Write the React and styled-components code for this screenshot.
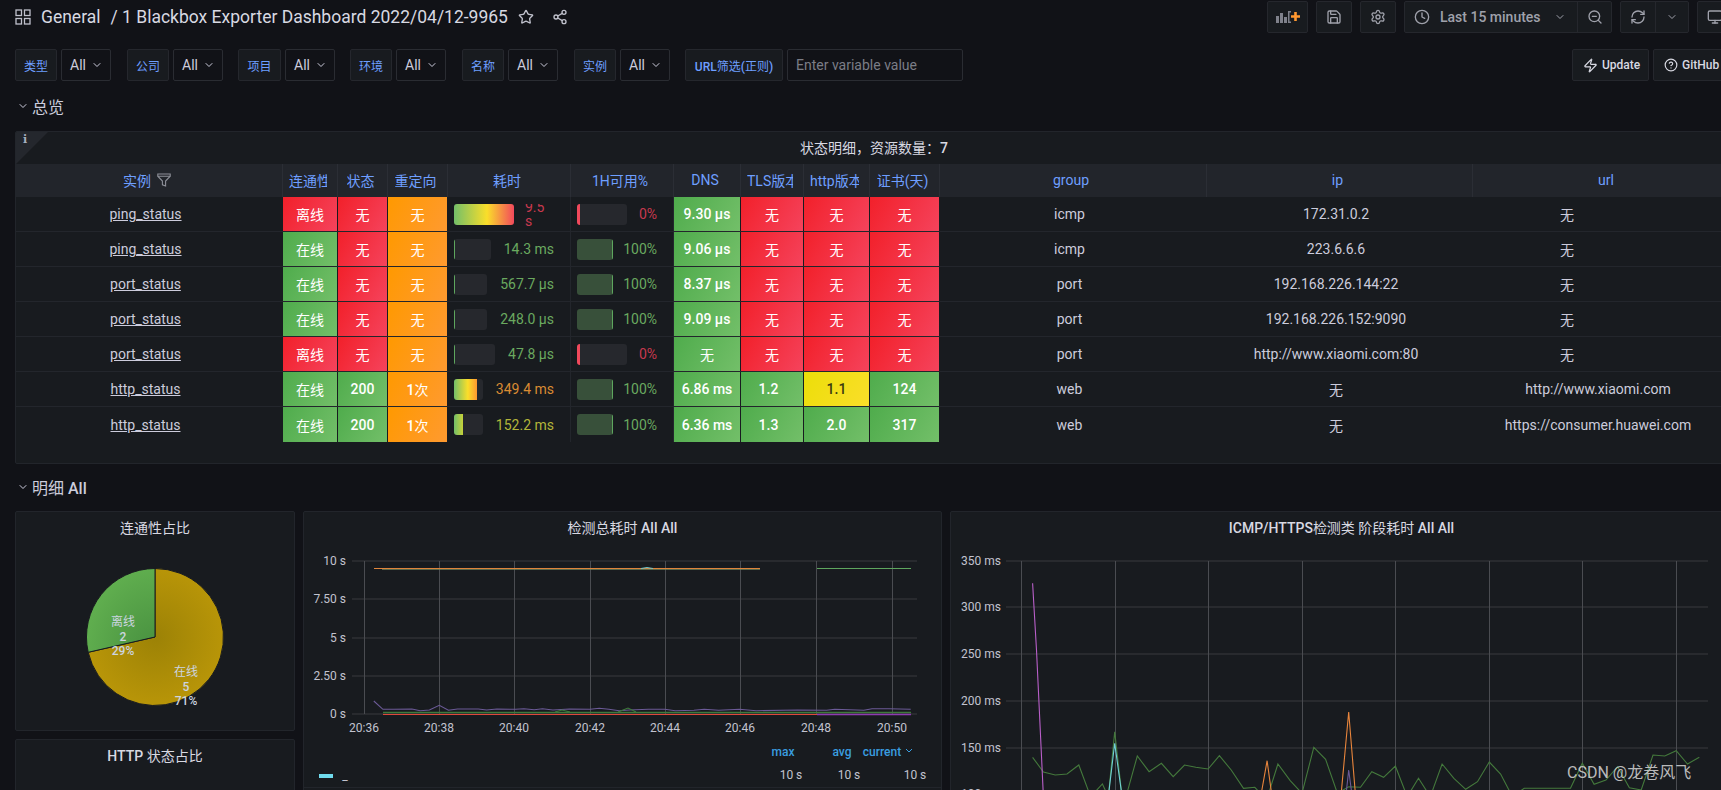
import React from "react";
import styled, { createGlobalStyle } from "styled-components";
import { ChevronDown, Star, Share2, Save, Settings, Clock, ZoomOut, RefreshCw, Monitor, Zap, CircleHelp } from "lucide-react";

const GlobalStyle = createGlobalStyle`
  html, body {
    margin: 0;
    height: 100%;
    background: #111217;
    overflow: hidden;
  }
  body {
    font-family: Roboto, "Noto Sans CJK SC", sans-serif;
    font-size: 14px;
    color: #ccccdc;
  }
`;

const Page = styled.div`
  width: 1721px;
  height: 790px;
  overflow: hidden;
  padding: 1px 0 0 15px;
  box-sizing: border-box;
`;

const TopBar = styled.div`
  display: flex;
  align-items: center;
  height: 32px;
  width: 1718px;
`;

const Title = styled.div`
  display: flex;
  align-items: center;
  font-size: 17.5px;
  color: #d8d9e2;
  white-space: nowrap;
`;

const TitleText = styled.span`
  margin-left: ${(p) => p.$ml}px;
`;

const TitleIcon = styled.span`
  display: flex;
  margin-left: ${(p) => p.$ml}px;
  color: #c0c1cc;
`;

const Tools = styled.div`
  display: flex;
  gap: 8px;
  margin-left: auto;
  flex-shrink: 0;
`;

const ToolButton = styled.div`
  display: flex;
  align-items: center;
  justify-content: center;
  flex-shrink: 0;
  height: 32px;
  box-sizing: border-box;
  width: ${(p) => p.$w}px;
  background: #181b1f;
  border: 1px solid #25272d;
  border-radius: 2px;
  color: #9fa1ab;
`;

const ToolGroup = styled.div`
  display: flex;
  flex-shrink: 0;
  height: 32px;
  box-sizing: border-box;
  background: #181b1f;
  border: 1px solid #25272d;
  border-radius: 2px;
  color: #9fa1ab;
`;

const ToolPart = styled.div`
  display: flex;
  align-items: center;
  justify-content: center;
  box-sizing: border-box;
  width: ${(p) => p.$w}px;
  font-weight: 500;
  border-left: ${(p) => (p.$split ? "1px solid #25272d" : "none")};
`;

const TimePart = styled(ToolPart)`
  justify-content: flex-start;
  gap: 10px;
  padding-left: 9px;
`;

const TimeCaret = styled(ChevronDown)`
  margin-left: 3px;
`;

const VarRow = styled.div`
  display: flex;
  align-items: center;
  height: 32px;
  margin-top: 16px;
  width: 1740px;
`;

const VarLabel = styled.div`
  display: flex;
  align-items: center;
  justify-content: center;
  height: 32px;
  box-sizing: border-box;
  width: ${(p) => p.$w}px;
  background: #181b1f;
  border: 1px solid #25272d;
  border-radius: 2px;
  color: #6e9fff;
  font-size: 12px;
  font-weight: 500;
  margin-left: ${(p) => p.$ml}px;
  white-space: nowrap;
`;

const VarSelect = styled.div`
  display: flex;
  align-items: center;
  justify-content: center;
  gap: 5px;
  height: 32px;
  box-sizing: border-box;
  width: 50px;
  margin-left: 4px;
  padding-left: 1px;
  background: #111217;
  border: 1px solid #2a2c32;
  border-radius: 2px;
  color: #ccccdc;
`;

const VarInput = styled.div`
  display: flex;
  align-items: center;
  height: 32px;
  box-sizing: border-box;
  width: 176px;
  margin-left: 4px;
  padding-left: 8px;
  background: #111217;
  border: 1px solid #2a2c32;
  border-radius: 2px;
  color: #7b7d86;
`;

const LinkButton = styled.div`
  display: flex;
  align-items: center;
  gap: 4px;
  height: 32px;
  box-sizing: border-box;
  padding-left: 10px;
  width: ${(p) => p.$w}px;
  background: #181b1f;
  border: 1px solid #25272d;
  border-radius: 2px;
  font-size: 12px;
  font-weight: 500;
  color: #d8d9e2;
  margin-left: ${(p) => p.$ml}px;
`;

const Section = styled.div`
  display: flex;
  align-items: center;
  gap: 3px;
  margin-top: ${(p) => p.$mt}px;
  height: 22px;
  padding-left: 2px;
  font-size: 16px;
  font-weight: 500;
  color: #ccccdc;
`;

const Panel = styled.div`
  background: #181b1f;
  border: 1px solid #22252b;
  border-radius: 2px;
  box-sizing: border-box;
  position: relative;
  overflow: hidden;
`;

const TablePanel = styled(Panel)`
  width: 1718px;
  height: 333px;
  margin-top: 14px;
`;

const Corner = styled.div`
  position: absolute;
  left: 0;
  top: 0;
  width: 0;
  height: 0;
  border-style: solid;
  border-width: 32px 32px 0 0;
  border-color: #24272d transparent transparent transparent;
`;

const CornerMark = styled.span`
  position: absolute;
  left: 7px;
  top: 1px;
  color: #a8b0c0;
  font-family: "DejaVu Serif", serif;
  font-size: 11px;
  font-weight: 700;
`;

const PanelTitle = styled.div`
  display: flex;
  align-items: center;
  justify-content: center;
  height: 32px;
  box-sizing: border-box;
  padding-bottom: 2px;
  font-weight: 500;
  color: #d8d9e2;
  white-space: nowrap;
`;

const Han = styled.span`
  font-weight: 400;
`;

const Row = styled.div`
  display: grid;
  grid-template-columns: 267px 55px 50px 60px 123px 103px 67px 63px 66px 70px 267px 266px 271px;
  height: ${(p) => (p.$head ? 33 : 35)}px;
  box-sizing: border-box;
  background: ${(p) => (p.$head ? "#22252b" : "transparent")};
  border-bottom: ${(p) => (p.$last || p.$head ? "none" : "1px solid #23262c")};
`;

const HeadCell = styled.div`
  display: flex;
  align-items: center;
  justify-content: center;
  gap: 6px;
  padding: 0 10px 2px 6px;
  overflow: hidden;
  white-space: nowrap;
  color: #6e9fff;
  border-right: 1px solid #2b2e35;
  svg { color: #8e9099; flex-shrink: 0; }
`;

const HeadLabel = styled.span`
  overflow: hidden;
  flex-shrink: 1;
`;

const tones = {
  red: "linear-gradient(120deg, #f2202a, #f5435c)",
  green: "linear-gradient(120deg, #4fac4c, #73bf69)",
  orange: "linear-gradient(120deg, #ff9900, #ff9a30)",
  yellow: "linear-gradient(120deg, #ecde09, #fade2a)",
};

const ToneCell = styled.div`
  display: flex;
  align-items: center;
  justify-content: center;
  padding-right: ${(p) => p.$pr || 0}px;
  margin-right: 1px;
  background: ${(p) => tones[p.$tone]};
  color: ${(p) => (p.$tone === "yellow" ? "#3a3a10" : "#fff")};
  font-weight: 500;
`;

const TextCell = styled.div`
  display: flex;
  align-items: center;
  justify-content: center;
  padding-right: ${(p) => (p.$pr === undefined ? 8 : p.$pr)}px;
  color: #ccccdc;
`;

const LinkText = styled.span`
  text-decoration: underline;
`;

const GaugeCell = styled.div`
  display: flex;
  align-items: center;
  justify-content: space-between;
  padding: 0 16px 0 6px;
  border-right: 1px solid #23262c;
`;

const GaugeBar = styled.div`
  display: flex;
  height: 21px;
  border-radius: 3px;
  overflow: hidden;
  background: #26282d;
  width: ${(p) => p.$w}px;
  flex-shrink: 0;
`;

const GaugeFill = styled.div`
  height: 100%;
  box-sizing: border-box;
`;

const GaugeValue = styled.div`
  color: ${(p) => p.$color};
  white-space: nowrap;
`;

// the value that no longer fits beside its bar wraps and gets cut at the top
const WrappedValue = styled.div`
  display: flex;
  align-items: flex-end;
  width: 29px;
  height: 24px;
  margin-top: 3px;
  line-height: 14px;
  overflow: hidden;
  color: ${(p) => p.$color};
`;

const Lower = styled.div`
  display: grid;
  grid-template-columns: 280px 639px 783px;
  column-gap: 8px;
  margin-top: 13px;
  width: 1718px;
`;

const SideColumn = styled.div`
  display: flex;
  flex-direction: column;
  gap: 8px;
`;

const PiePanel = styled(Panel)`
  height: 220px;
`;

const HttpPanel = styled(Panel)`
  height: 100px;
`;

const GraphPanel = styled(Panel)`
  height: 290px;
`;

const Chart = styled.svg`
  display: block;
`;

const ChartText = styled.text`
  fill: ${(p) => p.$fill || "#c2c3cf"};
  font-family: Roboto, "Noto Sans CJK SC", sans-serif;
  font-size: 12px;
  font-weight: ${(p) => p.$weight || 400};
  text-anchor: ${(p) => p.$anchor || "end"};
`;

const Watermark = styled.div`
  position: absolute;
  left: 1567px;
  top: 759px;
  color: #d6d6d6;
  font-size: 16px;
  white-space: nowrap;
  opacity: 0.85;
`;

// CJK in the reference never gets a heavier weight, only the latin around it does
const mixed = (text) => (
  <span>
    {text.split(/([\u4e00-\u9fff\uff0c\uff1a]+)/).map((part, i) =>
      i % 2 ? <Han key={i}>{part}</Han> : part
    )}
  </span>
);

const variables = [
  { label: "类型", ml: 0, w: 42 },
  { label: "公司", ml: 16, w: 42 },
  { label: "项目", ml: 15, w: 43 },
  { label: "环境", ml: 15, w: 42 },
  { label: "名称", ml: 16, w: 42 },
  { label: "实例", ml: 16, w: 42 },
];

const heads = ["连通性", "状态", "重定向", "耗时", "1H可用%", "DNS", "TLS版本", "http版本", "证书(天)", "group", "ip", "url"];

const GREEN_V = "#6aa95f";
const RED_V = "#c8394e";

const rows = [
  {
    name: "ping_status", conn: ["离线", "red"], state: ["无", "red"], redirect: "无",
    ms: { w: 60, fill: 60, grad: "linear-gradient(90deg, #73bf69, #fade2a 55%, #f2495c)", text: "9.5 s", color: RED_V, wrap: true },
    up: 0, upText: "0%", dns: ["9.30 μs", "green"], tls: ["无", "red"], http: ["无", "red"], cert: ["无", "red"],
    group: "icmp", ip: "172.31.0.2", url: "无",
  },
  {
    name: "ping_status", conn: ["在线", "green"], state: ["无", "red"], redirect: "无",
    ms: { w: 37, text: "14.3 ms", color: GREEN_V },
    up: 1, upText: "100%", dns: ["9.06 μs", "green"], tls: ["无", "red"], http: ["无", "red"], cert: ["无", "red"],
    group: "icmp", ip: "223.6.6.6", url: "无",
  },
  {
    name: "port_status", conn: ["在线", "green"], state: ["无", "red"], redirect: "无",
    ms: { w: 33, text: "567.7 μs", color: GREEN_V },
    up: 1, upText: "100%", dns: ["8.37 μs", "green"], tls: ["无", "red"], http: ["无", "red"], cert: ["无", "red"],
    group: "port", ip: "192.168.226.144:22", url: "无",
  },
  {
    name: "port_status", conn: ["在线", "green"], state: ["无", "red"], redirect: "无",
    ms: { w: 33, text: "248.0 μs", color: GREEN_V },
    up: 1, upText: "100%", dns: ["9.09 μs", "green"], tls: ["无", "red"], http: ["无", "red"], cert: ["无", "red"],
    group: "port", ip: "192.168.226.152:9090", url: "无",
  },
  {
    name: "port_status", conn: ["离线", "red"], state: ["无", "red"], redirect: "无",
    ms: { w: 41, text: "47.8 μs", color: GREEN_V },
    up: 0, upText: "0%", dns: ["无", "green"], tls: ["无", "red"], http: ["无", "red"], cert: ["无", "red"],
    group: "port", ip: "http://www.xiaomi.com:80", url: "无",
  },
  {
    name: "http_status", conn: ["在线", "green"], state: ["200", "green"], redirect: "1次",
    ms: { w: 29, fill: 23, grad: "linear-gradient(90deg, #73bf69, #fade2a 60%, #ff9830)", text: "349.4 ms", color: "#d98b33" },
    up: 1, upText: "100%", dns: ["6.86 ms", "green"], tls: ["1.2", "green"], http: ["1.1", "yellow"], cert: ["124", "green"],
    group: "web", ip: "无", url: "http://www.xiaomi.com",
  },
  {
    name: "http_status", conn: ["在线", "green"], state: ["200", "green"], redirect: "1次",
    ms: { w: 29, fill: 9, grad: "linear-gradient(90deg, #73bf69, #c6d23a)", text: "152.2 ms", color: "#b3b53a" },
    up: 1, upText: "100%", dns: ["6.36 ms", "green"], tls: ["1.3", "green"], http: ["2.0", "green"], cert: ["317", "green"],
    group: "web", ip: "无", url: "https://consumer.huawei.com",
  },
];

const durationTimes = [
  ["20:36", 364], ["20:38", 439], ["20:40", 514], ["20:42", 590],
  ["20:44", 665], ["20:46", 740], ["20:48", 816], ["20:50", 892],
];
const durationTicks = [["10 s", 561], ["7.50 s", 599], ["5 s", 638], ["2.50 s", 676], ["0 s", 714]];

// series were read off zoomed crops of the reference, so they are in crop units
const fromCrop = (pts, left, scale) =>
  pts.map(([x, y]) => `${(left + x / scale).toFixed(1)},${(510 + y / 3).toFixed(1)}`).join(" ");
const durationLine = (pts) => fromCrop(pts, 300, 2.412);
const phaseLine = (pts) => fromCrop(pts, 950, 2.034);

const purpleLow = [[178,573],[200,598],[225,598],[270,597],[290,602],[312,600],[336,586],[358,601],[380,597],[430,597],[450,600],[475,597],[520,598],[540,596],[565,599],[585,596],[610,600],[650,597],[700,598],[722,595],[745,598],[770,602],[795,600],[840,598],[880,598],[905,602],[950,601],[975,598],[1010,601],[1060,598],[1100,602],[1200,600],[1270,601],[1290,598],[1360,601],[1380,596],[1420,596],[1473,598]];
const phaseGreen = [[168,742],[190,786],[214,795],[238,792],[262,765],[286,860],[310,822],[322,860],[335,665],[350,860],[358,860],[381,738],[405,785],[430,760],[454,800],[477,765],[500,772],[525,777],[548,737],[572,780],[597,835],[620,832],[644,870],[667,762],[692,812],[716,850],[740,712],[764,748],[788,850],[811,830],[835,832],[858,785],[882,802],[906,768],[930,860],[953,805],[977,860],[1001,762],[1025,805],[1049,838],[1073,815],[1097,756],[1120,792],[1144,860],[1168,835],[1192,835],[1216,835],[1240,835],[1262,835],[1286,760],[1310,823],[1334,810],[1358,770],[1382,833],[1406,840],[1430,735],[1454,738],[1477,722],[1500,762],[1524,742]];
const phaseY = [["350 ms", 561], ["300 ms", 607], ["250 ms", 654], ["200 ms", 701], ["150 ms", 748], ["100 ms", 794]];
const phaseX = [1021, 1115, 1208, 1302, 1395, 1489, 1582, 1676];

const H_GRID = "#2e3035";
const V_GRID = "#4a4c51";

function GridIcon() {
  return (
    <svg width="16" height="16" viewBox="0 0 16 16" fill="none" stroke="#c0c1cc" strokeWidth="1.3">
      <rect x="1" y="1" width="5.5" height="5.5" />
      <rect x="9.5" y="1" width="5.5" height="5.5" />
      <rect x="1" y="9.5" width="5.5" height="5.5" />
      <rect x="9.5" y="9.5" width="5.5" height="5.5" />
    </svg>
  );
}

function AddPanelIcon() {
  return (
    <svg width="24" height="14" viewBox="0 0 24 14">
      <g fill="#7f818b">
        <rect x="0" y="6" width="3" height="7" />
        <rect x="4" y="3" width="3" height="10" />
        <rect x="8" y="7" width="3" height="6" />
        <path d="M12 1h3v1.5h-1.5v9H15V13h-3z" />
      </g>
      <path d="M19.5 2v9M15 6.5h9" stroke="#ff9830" strokeWidth="2.6" />
    </svg>
  );
}

function FunnelIcon() {
  return (
    <svg width="14" height="14" viewBox="0 0 14 14" fill="none" stroke="currentColor" strokeWidth="1.1">
      <path d="M.8 1h12.4v2.2L8.6 8v5l-3.2-1.2V8L.8 3.2z" />
      <path d="M.8 3.2h12.4" />
    </svg>
  );
}

function Pie() {
  return (
    <Chart width="278" height="186" viewBox="16 544 278 186">
      <defs>
        <radialGradient id="pieGold">
          <stop offset="0" stopColor="#9c8206" />
          <stop offset="1" stopColor="#b89508" />
        </radialGradient>
        <radialGradient id="pieGreen" cx="1" cy="1" r="1">
          <stop offset="0" stopColor="#478f3f" />
          <stop offset="1" stopColor="#5fad4e" />
        </radialGradient>
      </defs>
      <path d="M155 637 L155 568.5 A68.5 68.5 0 1 1 88.2 652.3 Z" fill="url(#pieGold)" stroke="#181b1f" strokeWidth="1" />
      <path d="M155 637 L88.2 652.3 A68.5 68.5 0 0 1 155 568.5 Z" fill="url(#pieGreen)" stroke="#181b1f" strokeWidth="1" />
      <ChartText x="123" y="626" $anchor="middle" $fill="#ccd5e0">离线</ChartText>
      <ChartText x="123" y="641" $anchor="middle" $fill="#ccd5e0" $weight={500}>2</ChartText>
      <ChartText x="123" y="655" $anchor="middle" $fill="#ccd5e0" $weight={500}>29%</ChartText>
      <ChartText x="186" y="676" $anchor="middle" $fill="#ccd5e0">在线</ChartText>
      <ChartText x="186" y="691" $anchor="middle" $fill="#ccd5e0" $weight={500}>5</ChartText>
      <ChartText x="186" y="705" $anchor="middle" $fill="#ccd5e0" $weight={500}>71%</ChartText>
    </Chart>
  );
}

function DurationChart() {
  return (
    <Chart width="637" height="256" viewBox="304 544 637 256">
      {durationTicks.map(([t, y]) => <path key={t} d={`M352 ${y}H917`} stroke={H_GRID} strokeWidth="1.5" />)}
      {durationTimes.map(([t, x]) => <path key={t} d={`M${x + 0.5} 561V714`} stroke={V_GRID} />)}
      {durationTicks.map(([t, y]) => <ChartText key={t} x="346" y={y + 4}>{t}</ChartText>)}
      {durationTimes.map(([t, x]) => <ChartText key={t} x={x} y="732" $anchor="middle">{t}</ChartText>)}
      <path d="M382 569.5H760" stroke="#7a8a5a" strokeWidth="0.7" />
      <path d="M374 568.5H760" stroke="#e0853c" strokeWidth="1.2" />
      <path d="M641 568.5Q647 566.5 653 568.5" stroke="#6fc6c9" strokeWidth="1" fill="none" />
      <path d="M817 568.5H911" stroke="#5ea65e" strokeWidth="1" />
      <polyline fill="none" stroke="#6b5a97" strokeWidth="1.1" points={durationLine(purpleLow)} />
      <path d="M383 712.5H911" stroke="#3f7a3c" strokeWidth="1.4" />
      <path d="M555 712 L562 710 L570 712 M618 712 L628 708 L636 712" stroke="#3f7a3c" strokeWidth="1.1" fill="none" />
      <path d="M383 714.5H817" stroke="#e0483b" strokeWidth="1" />
      <path d="M817 714.5H911" stroke="#8e3bb0" strokeWidth="1.4" />
      <ChartText x="783" y="756" $anchor="middle" $fill="#3a9ee0" $weight={500}>max</ChartText>
      <ChartText x="842" y="756" $anchor="middle" $fill="#3a9ee0" $weight={500}>avg</ChartText>
      <ChartText x="882" y="756" $anchor="middle" $fill="#3a9ee0" $weight={500}>current</ChartText>
      <path d="M906 749l3 3 3-3" stroke="#3a9ee0" fill="none" />
      <ChartText x="791" y="779" $anchor="middle">10 s</ChartText>
      <ChartText x="849" y="779" $anchor="middle">10 s</ChartText>
      <ChartText x="915" y="779" $anchor="middle">10 s</ChartText>
      <rect x="319" y="774" width="14" height="4" fill="#70dbed" />
      <ChartText x="345" y="780" $anchor="middle">_</ChartText>
      <path d="M304 787.5H941" stroke="#22252b" strokeWidth="1" />
    </Chart>
  );
}

function PhaseChart() {
  return (
    <Chart width="781" height="256" viewBox="951 544 781 256">
      {phaseY.map(([t, y]) => <path key={t} d={`M1006 ${y}H1708`} stroke={H_GRID} strokeWidth="1.5" />)}
      {phaseX.map((x) => <path key={x} d={`M${x + 0.5} 561V800`} stroke={V_GRID} />)}
      {phaseY.map(([t, y]) => <ChartText key={t} x="1001" y={y + 4}>{t}</ChartText>)}
      <g fill="none" strokeWidth="1.1">
        <polyline stroke="#44793c" points={phaseLine(phaseGreen)} />
        <polyline stroke="#b95fc9" points={phaseLine([[168,220],[176,420],[190,860]])} />
        <polyline stroke="#6fd0d6" points={phaseLine([[322,860],[335,700],[350,860]])} />
        <polyline stroke="#e8853c" points={phaseLine([[632,860],[645,752],[655,860]])} />
        <polyline stroke="#e8853c" points={phaseLine([[795,860],[811,606],[825,860]])} />
        <polyline stroke="#6b5a97" points={phaseLine([[805,860],[811,780],[818,860]])} />
      </g>
    </Chart>
  );
}

function urlPadding(url) {
  // the empty url sits well left of the column centre in the reference
  return url === "无" ? 83 : 21;
}

export default function App() {
  return (
    <Page>
      <GlobalStyle />
      <TopBar>
        <Title>
          <GridIcon />
          <TitleText $ml={10}>General</TitleText>
          <TitleText $ml={10}>/ 1 Blackbox Exporter Dashboard 2022/04/12-9965</TitleText>
          <TitleIcon $ml={10}><Star size={16} /></TitleIcon>
          <TitleIcon $ml={18}><Share2 size={16} /></TitleIcon>
        </Title>
        <Tools>
          <ToolButton $w={41}><AddPanelIcon /></ToolButton>
          <ToolButton $w={36}><Save size={16} /></ToolButton>
          <ToolButton $w={36}><Settings size={16} /></ToolButton>
          <ToolGroup>
            <TimePart $w={172}><Clock size={16} />Last 15 minutes<TimeCaret size={12} /></TimePart>
            <ToolPart $w={34} $split><ZoomOut size={16} /></ToolPart>
          </ToolGroup>
          <ToolGroup>
            <ToolPart $w={34}><RefreshCw size={16} /></ToolPart>
            <ToolPart $w={33} $split><ChevronDown size={12} /></ToolPart>
          </ToolGroup>
          <ToolButton $w={36}><Monitor size={16} /></ToolButton>
        </Tools>
      </TopBar>

      <VarRow>
        {variables.map((v) => (
          <React.Fragment key={v.label}>
            <VarLabel $ml={v.ml} $w={v.w}>{mixed(v.label)}</VarLabel>
            <VarSelect>All<ChevronDown size={12} /></VarSelect>
          </React.Fragment>
        ))}
        <VarLabel $ml={15} $w={98}>{mixed("URL筛选(正则)")}</VarLabel>
        <VarInput>Enter variable value</VarInput>
        <LinkButton $ml={609} $w={77}><Zap size={15} />Update</LinkButton>
        <LinkButton $ml={4} $w={80}><CircleHelp size={14} />GitHub</LinkButton>
      </VarRow>

      <Section $mt={14}><ChevronDown size={12} />{mixed("总览")}</Section>

      <TablePanel>
        <Corner />
        <CornerMark>i</CornerMark>
        <PanelTitle>{mixed("状态明细\uff0c资源数量\uff1a7")}</PanelTitle>
        <Row $head>
          <HeadCell>实例<FunnelIcon /></HeadCell>
          {heads.map((h) => <HeadCell key={h}><HeadLabel>{h}</HeadLabel></HeadCell>)}
        </Row>
        {rows.map((r, i) => (
          <Row key={i} $last={i === rows.length - 1}>
            <TextCell><LinkText>{r.name}</LinkText></TextCell>
            <ToneCell $tone={r.conn[1]}>{mixed(r.conn[0])}</ToneCell>
            <ToneCell $tone={r.state[1]}>{mixed(r.state[0])}</ToneCell>
            <ToneCell $tone="orange">{mixed(r.redirect)}</ToneCell>
            <GaugeCell>
              <GaugeBar $w={r.ms.w}>
                {r.ms.grad
                  ? <GaugeFill style={{ width: r.ms.fill, background: r.ms.grad }} />
                  : <GaugeFill style={{ width: 1, background: "#5ea65e" }} />}
              </GaugeBar>
              {r.ms.wrap
                ? <WrappedValue $color={r.ms.color}><span>{r.ms.text}</span></WrappedValue>
                : <GaugeValue $color={r.ms.color}>{r.ms.text}</GaugeValue>}
            </GaugeCell>
            <GaugeCell>
              <GaugeBar $w={r.up ? 36 : 50}>
                {r.up
                  ? <GaugeFill style={{ width: 36, background: "#38503a", borderRight: "1.5px solid #5ea65e" }} />
                  : <GaugeFill style={{ width: 3, background: "#f2495c" }} />}
              </GaugeBar>
              <GaugeValue $color={r.up ? GREEN_V : RED_V}>{r.upText}</GaugeValue>
            </GaugeCell>
            <ToneCell $tone={r.dns[1]}>{mixed(r.dns[0])}</ToneCell>
            <ToneCell $tone={r.tls[1]} $pr={r.tls[0] === "无" ? 0 : 7}>{mixed(r.tls[0])}</ToneCell>
            <ToneCell $tone={r.http[1]}>{mixed(r.http[0])}</ToneCell>
            <ToneCell $tone={r.cert[1]}>{mixed(r.cert[0])}</ToneCell>
            <TextCell>{r.group}</TextCell>
            <TextCell>{r.ip}</TextCell>
            <TextCell $pr={urlPadding(r.url)}>{r.url}</TextCell>
          </Row>
        ))}
      </TablePanel>

      <Section $mt={12}><ChevronDown size={12} />{mixed("明细 All")}</Section>

      <Lower>
        <SideColumn>
          <PiePanel>
            <PanelTitle>{mixed("连通性占比")}</PanelTitle>
            <Pie />
          </PiePanel>
          <HttpPanel>
            <PanelTitle>{mixed("HTTP 状态占比")}</PanelTitle>
          </HttpPanel>
        </SideColumn>
        <GraphPanel>
          <PanelTitle>{mixed("检测总耗时 All All")}</PanelTitle>
          <DurationChart />
        </GraphPanel>
        <GraphPanel>
          <PanelTitle>{mixed("ICMP/HTTPS检测类 阶段耗时 All All")}</PanelTitle>
          <PhaseChart />
        </GraphPanel>
      </Lower>
      <Watermark>CSDN @龙卷风飞</Watermark>
    </Page>
  );
}
